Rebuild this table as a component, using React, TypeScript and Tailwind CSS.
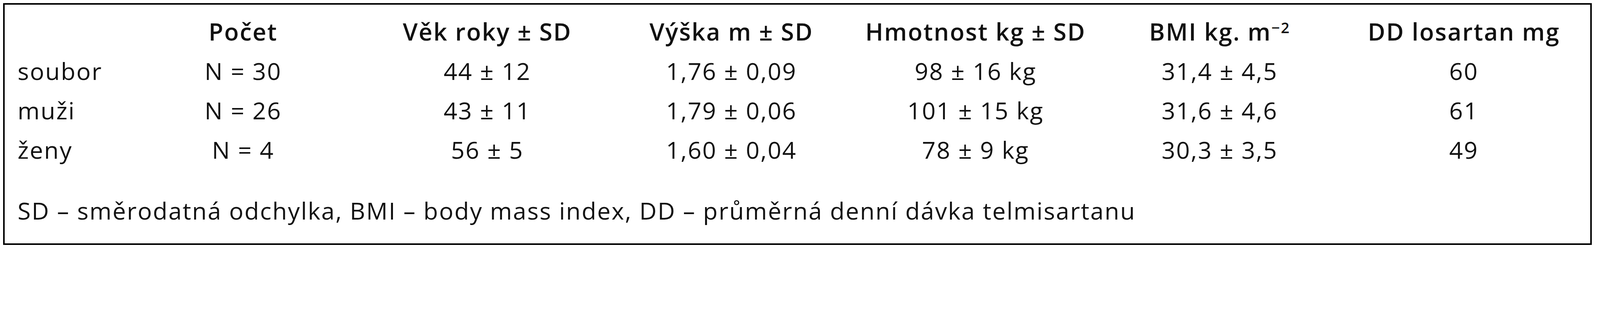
import type { ReactNode } from "react";

type Row = { label: string; values: string[] };

const rows: Row[] = [
  { label: "soubor", values: ["N = 30", "44 ± 12", "1,76 ± 0,09", "98 ± 16 kg", "31,4 ± 4,5", "60"] },
  { label: "muži", values: ["N = 26", "43 ± 11", "1,79 ± 0,06", "101 ± 15 kg", "31,6 ± 4,6", "61"] },
  { label: "ženy", values: ["N = 4", "56 ± 5", "1,60 ± 0,04", "78 ± 9 kg", "30,3 ± 3,5", "49"] },
];

const headers: ReactNode[] = [
  "Počet",
  "Věk roky ± SD",
  "Výška m ± SD",
  "Hmotnost kg ± SD",
  <>
    BMI kg. m<sup className="text-[38px]">−2</sup>
  </>,
  "DD losartan mg",
];

export default function App() {
  return (
    <div className="min-h-screen bg-white p-[8px] font-['Open_Sans','Noto_Sans',sans-serif] text-[61px] leading-[101px] tracking-[2.5px] text-[#111]">
      <div className="w-[4067px] border-4 border-black pt-[18px] pr-[10px] pb-[34px] pl-[33px]">
        <div className="grid grid-cols-[265px_repeat(6,625px)]">
          <div />
          {headers.map((h, i) => (
            <div key={i} className="text-center font-semibold whitespace-nowrap">
              {h}
            </div>
          ))}
          {rows.map((r) => (
            <div key={r.label} className="contents">
              <div className="whitespace-nowrap">{r.label}</div>
              {r.values.map((v, i) => (
                <div key={i} className="text-center whitespace-nowrap">
                  {v}
                </div>
              ))}
            </div>
          ))}
        </div>
        <p className="mt-[55px] whitespace-nowrap">
          SD – směrodatná odchylka, BMI – body mass index, DD – průměrná denní dávka telmisartanu
        </p>
      </div>
    </div>
  );
}
